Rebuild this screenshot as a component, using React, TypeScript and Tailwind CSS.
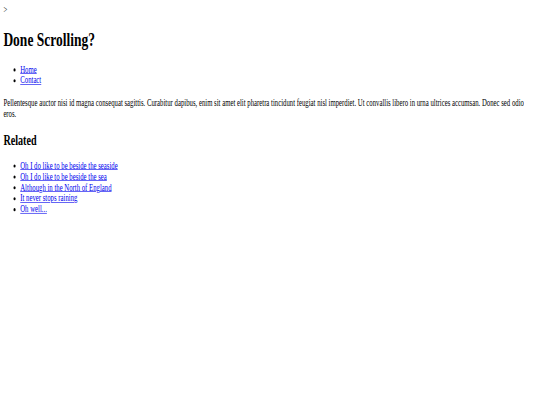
const related = [
  "Oh I do like to be beside the seaside",
  "Oh I do like to be beside the sea",
  "Although in the North of England",
  "It never stops raining",
  "Oh well...",
];

export default function App() {
  return (
    <div className="h-[405px] w-[540px] overflow-hidden bg-white">
      <div
        className="w-[1280px] origin-top-left scale-x-[0.421875] scale-y-[0.605] p-2 text-[16px] leading-[normal] text-black"
        style={{ fontFamily: '"Liberation Serif", "Times New Roman", serif' }}
      >
        &gt;
        <h1 className="my-[21.44px] text-[32px] font-bold">Done Scrolling?</h1>
        <ul className="my-4 list-disc pl-10">
          <li>
            <a href="#" className="text-[#0000EE] underline">Home</a>
          </li>
          <li>
            <a href="#" className="text-[#0000EE] underline">Contact</a>
          </li>
        </ul>
        <p className="mt-5 mb-4">
          Pellentesque auctor nisi id magna consequat sagittis. Curabitur dapibus, enim sit amet elit pharetra tincidunt
          feugiat nisl imperdiet. Ut convallis libero in urna ultrices accumsan. Donec sed odio eros.
        </p>
        <h2 className="my-[19.92px] text-[24px] font-bold">Related</h2>
        <ul className="my-4 list-disc pl-10">
          {related.map((r) => (
            <li key={r}>
              <a href="#" className="text-[#0000EE] underline">{r}</a>
            </li>
          ))}
        </ul>
      </div>
    </div>
  );
}
